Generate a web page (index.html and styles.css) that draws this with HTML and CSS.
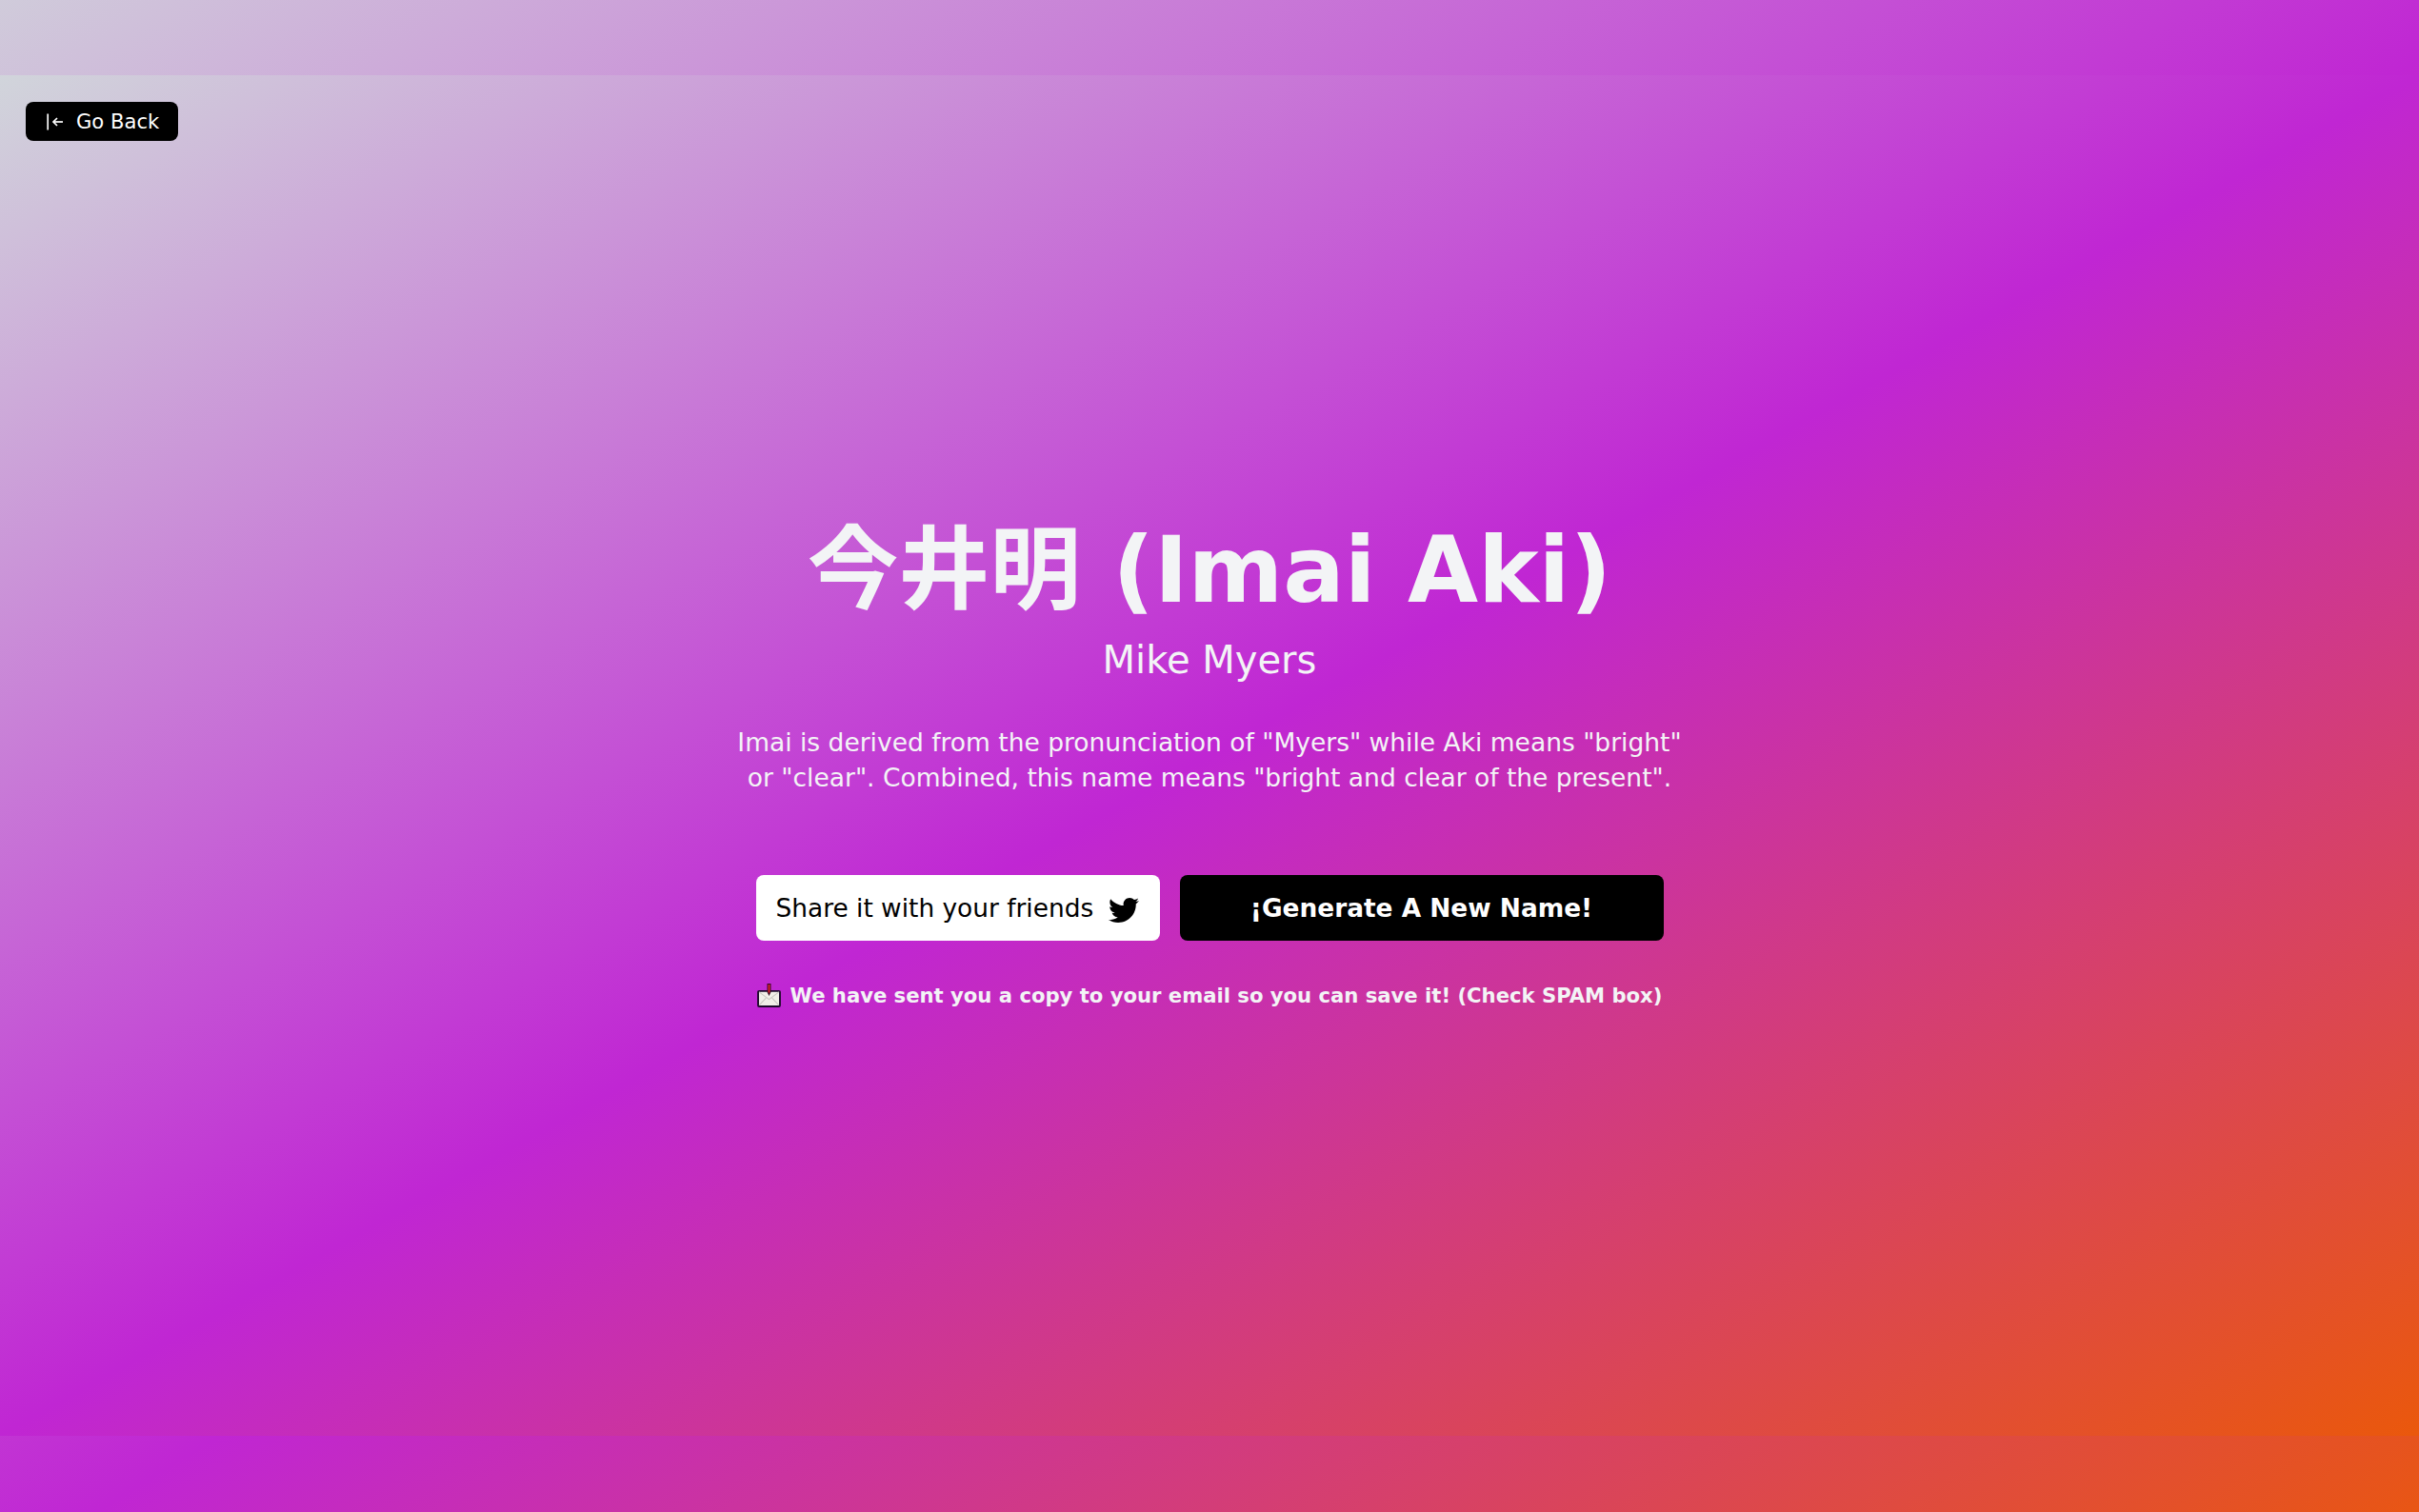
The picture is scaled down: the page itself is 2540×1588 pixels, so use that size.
FILE: index.html
```html
<!DOCTYPE html>
<html lang="en">
<head>
<meta charset="utf-8">
<title>Imai Aki</title>
<link rel="stylesheet" href="styles.css">
</head>
<body>
<main class="stage">
  <div class="topbar">
    <a class="back" href="#">
      <svg class="back-icon" viewBox="0 0 18 18" aria-hidden="true"><path d="M1.2 0.5v17" /><path d="M17 9H7" /><path d="M11 5 7 9l4 4" /></svg>
      <span>Go Back</span>
    </a>
  </div>
  <section class="content">
    <h1 class="title">今井明 (Imai Aki)</h1>
    <h2 class="name">Mike Myers</h2>
    <p class="desc">Imai is derived from the pronunciation of "Myers" while Aki means "bright" or "clear". Combined, this name means "bright and clear of the present".</p>
    <div class="actions">
      <a class="btn btn-share" href="#">
        <span>Share it with your friends</span>
        <svg class="bird" viewBox="0 0 512 512" aria-hidden="true"><path d="M459.37 151.716c.325 4.548.325 9.097.325 13.645 0 138.72-105.583 298.558-298.558 298.558-59.452 0-114.68-17.219-161.137-47.106 8.447.974 16.568 1.299 25.34 1.299 49.055 0 94.213-16.568 130.274-44.832-46.132-.975-84.792-31.188-98.112-72.772 6.498.974 12.995 1.624 19.818 1.624 9.421 0 18.843-1.3 27.614-3.573-48.081-9.747-84.143-51.98-84.143-102.985v-1.299c13.969 7.797 30.214 12.67 47.431 13.319-28.264-18.843-46.781-51.005-46.781-87.391 0-19.492 5.197-37.36 14.294-52.954 51.655 63.675 129.3 105.258 216.365 109.807-1.624-7.797-2.599-15.918-2.599-24.04 0-57.828 46.782-104.934 104.934-104.934 30.213 0 57.502 12.67 76.67 33.137 23.715-4.548 46.456-13.32 66.599-25.34-7.798 24.366-24.366 44.833-46.132 57.827 21.117-2.273 41.584-8.122 60.426-16.243-14.292 20.791-32.161 39.308-52.628 54.253z"/></svg>
      </a>
      <a class="btn btn-generate" href="#">¡Generate A New Name!</a>
    </div>
    <p class="notice">
      <svg class="mail" viewBox="0 0 24 24" aria-hidden="true">
        <rect class="mail-body" x="1" y="7.5" width="22" height="15.5" rx="1"/>
        <path class="mail-flap" d="M2 8.5 12 16l10-7.5M2 22l7-7.5M22 22l-7-7.5"/>
        <path class="mail-arrow" d="M10.6 0.5h2.8v8l-1.4 2.8-1.4-2.8z"/>
      </svg>
      <span>We have sent you a copy to your email so you can save it! (Check SPAM box)</span>
    </p>
  </section>
</main>
</body>
</html>
```
FILE: styles.css
```css
* { box-sizing: border-box; }
html, body { margin: 0; padding: 0; }
body {
  min-height: 1588px;
  padding: 79px 0 80px;
  background: linear-gradient(to bottom right, #d1d5db -3%, #c026d3 52%, #ea580c 102%);
  font-family: "DejaVu Sans", "Noto Sans CJK JP", sans-serif;
  color: #f3f4f6;
}
.stage {
  height: 1429px;
  display: flex;
  flex-direction: column;
  background: linear-gradient(to bottom right, #d1d5db, #c026d3, #ea580c);
}
.topbar { padding: 28px 27px 0; display: flex; }
.back {
  display: flex;
  align-items: center;
  gap: 13px;
  height: 41px;
  width: 160px;
  padding-left: 22px;
  border-radius: 8px;
  background: #000;
  color: #fff;
  font-size: 21.12px;
  text-decoration: none;
}
.back-icon {
  width: 18px;
  height: 18px;
  fill: none;
  stroke: #fff;
  stroke-width: 1.7;
}
.content {
  display: flex;
  flex-direction: column;
  align-items: center;
  padding-top: 394px;
}
.title {
  margin: 0;
  font-size: 95.7px;
  line-height: 115px;
  font-weight: 700;
  color: #f3f4f6;
}
.name {
  margin: 6px 0 0;
  font-size: 40px;
  line-height: 60px;
  font-weight: 400;
  color: #f3f4f6;
}
.desc {
  width: 1018px;
  margin: 39px 0 0;
  font-size: 26.5px;
  line-height: 36.96px;
  text-align: center;
  color: #f3f4f6;
}
.actions {
  display: flex;
  gap: 21px;
  margin-top: 83px;
}
.btn {
  height: 69px;
  display: flex;
  align-items: center;
  border-radius: 8px;
  font-size: 26.4px;
  text-decoration: none;
}
.btn-share {
  width: 424px;
  padding-left: 21px;
  gap: 16px;
  background: #fff;
  color: #000;
}
.bird { width: 32px; height: 32px; fill: #000; flex: none; margin-top: 6px; }
.btn-generate {
  width: 508px;
  justify-content: center;
  background: #000;
  color: #fff;
  font-weight: 700;
}
.notice {
  display: flex;
  align-items: center;
  gap: 10px;
  margin: 42px 0 0;
  font-size: 21.15px;
  line-height: 32px;
  font-weight: 700;
  color: #f3f4f6;
}
.mail { width: 25px; height: 25px; flex: none; }
.mail-body { fill: #f1efe8; stroke: #1c0a2a; stroke-width: 1.8; }
.mail-flap { fill: none; stroke: #c9c7c0; stroke-width: 1; }
.mail-arrow { fill: #e0202a; stroke: #3a0a22; stroke-width: 1; }
```
